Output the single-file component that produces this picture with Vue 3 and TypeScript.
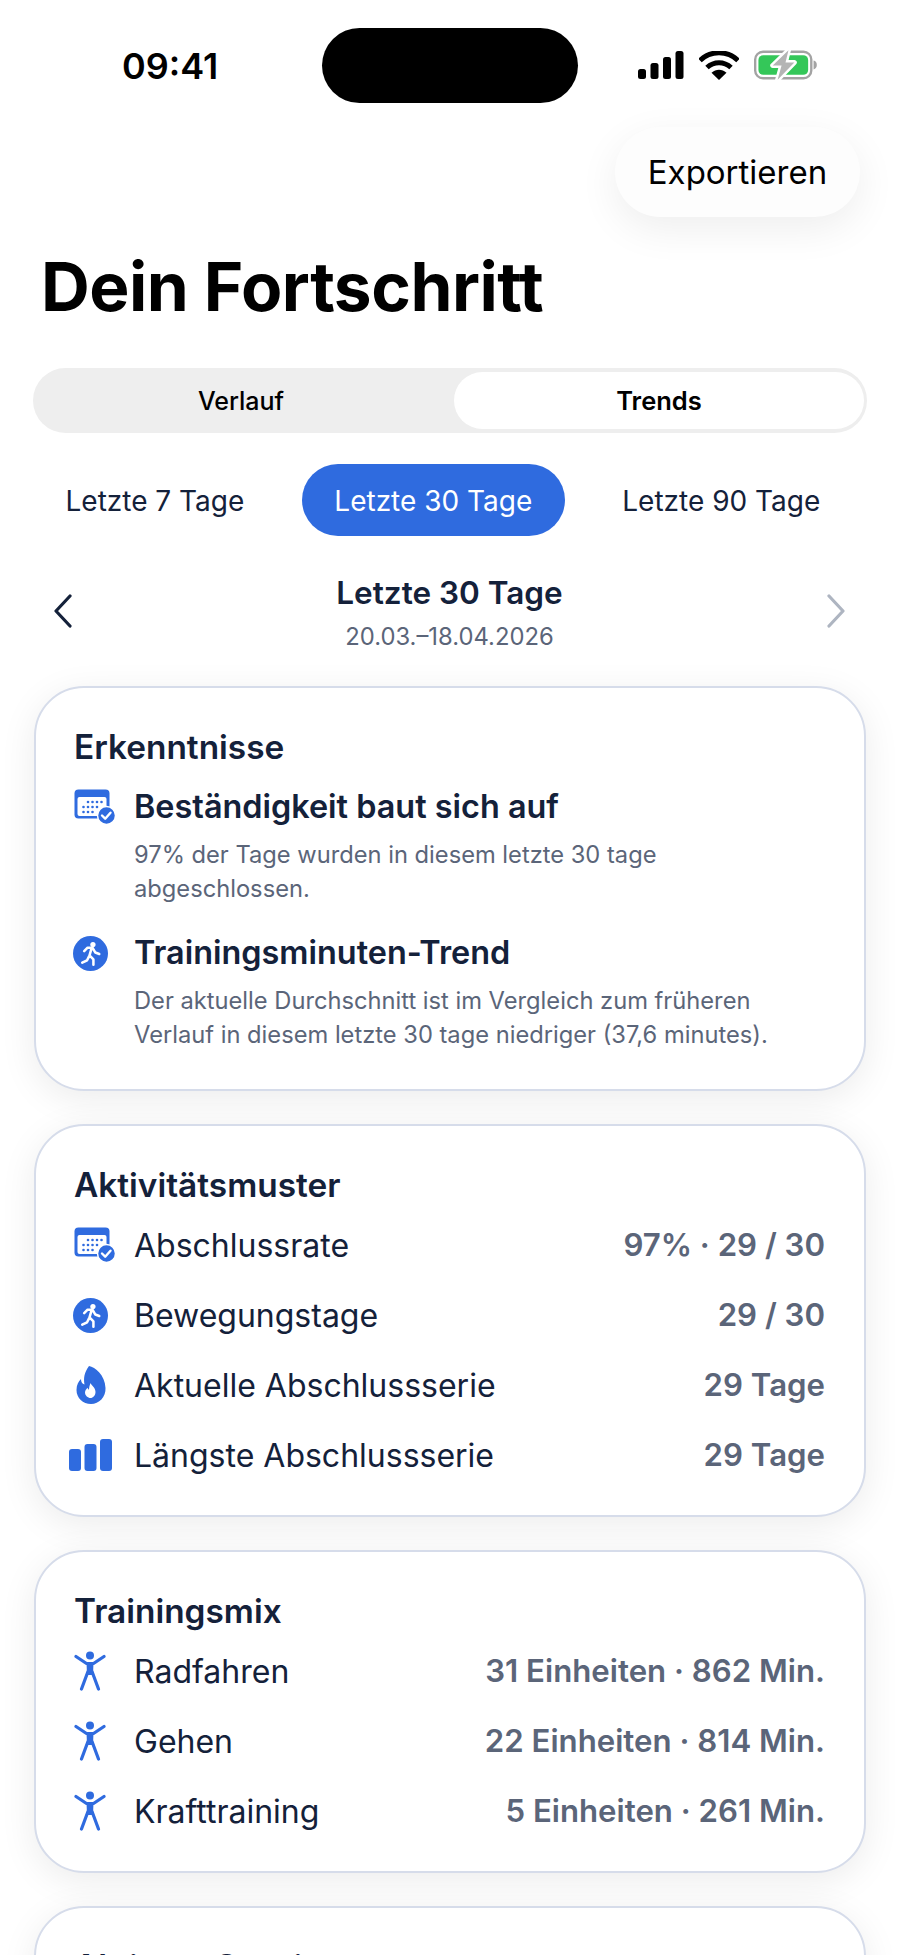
<script setup lang="ts">
interface Row { icon: string; label: string; value: string }
const ranges = ['Letzte 7 Tage', 'Letzte 30 Tage', 'Letzte 90 Tage']
const activity: Row[] = [
  { icon: 'cal', label: 'Abschlussrate', value: '97% · 29 / 30' },
  { icon: 'run', label: 'Bewegungstage', value: '29 / 30' },
  { icon: 'fire', label: 'Aktuelle Abschlussserie', value: '29 Tage' },
  { icon: 'bars', label: 'Längste Abschlussserie', value: '29 Tage' },
]
const mix: Row[] = [
  { icon: 'fig', label: 'Radfahren', value: '31 Einheiten · 862 Min.' },
  { icon: 'fig', label: 'Gehen', value: '22 Einheiten · 814 Min.' },
  { icon: 'fig', label: 'Krafttraining', value: '5 Einheiten · 261 Min.' },
]
const dots: [number, number][] = [
  [14, 13], [18.500, 13], [23, 13], [27.500, 13],
  [9.500, 18], [14, 18], [18.500, 18], [23, 18],
  [9.500, 23], [14, 23], [18.500, 23],
]
</script>

<template>
  <div class="page">
    <div class="status">
      <span class="time">09:41</span>
      <div class="island"></div>
      <div class="sys">
        <svg width="46" height="28" viewBox="0 0 46 28"><rect x="0" y="18" width="8" height="10" rx="2.5"/><rect x="12.5" y="12" width="8" height="16" rx="2.5"/><rect x="25" y="6" width="8" height="22" rx="2.5"/><rect x="37.5" y="0" width="8" height="28" rx="2.5"/></svg>
        <svg width="40" height="29" viewBox="0 0 40 29"><path d="M1 9.500C11.500-.8 28.500-.8 39 9.500" fill="none" stroke="#000" stroke-width="5" /><path d="M8 16.500c7-6.500 17-6.500 24 0" fill="none" stroke="#000" stroke-width="5"/><path d="M12.500 21.800c4.500-4 10.500-4 15 0L20 29z"/></svg>
        <svg width="63" height="32" viewBox="0 -1 64 32">
          <rect x="1.200" y="1.500" width="57" height="27" rx="8" fill="none" stroke="#a3a3a3" stroke-width="2.400"/>
          <rect x="4.500" y="5" width="50.500" height="20" rx="5" fill="#34c759"/>
          <path d="M60.500 10.500c2.300.6 3.300 2.200 3.300 4.500s-1 3.900-3.300 4.500z" fill="#a3a3a3"/>
          <path d="M35 0 19 15.500h9L24 30l17-17.500h-9z" fill="#b4b4b4" stroke="#fff" stroke-width="5" stroke-linejoin="round" paint-order="stroke"/>
        </svg>
      </div>
    </div>

    <div class="export-row"><button class="export">Exportieren</button></div>
    <h1 class="title">Dein Fortschritt</h1>

    <div class="segment">
      <div class="seg-item seg-off">Verlauf</div>
      <div class="seg-item seg-on">Trends</div>
    </div>

    <div class="ranges">
      <div v-for="(r, i) in ranges" :key="r" class="range" :class="{ 'range-on': i === 1 }">{{ r }}</div>
    </div>

    <div class="period">
      <svg class="chev" width="20" height="34" viewBox="0 0 20 34"><path d="M17 2 3 17l14 15" fill="none" stroke="#14213a" stroke-width="3.200" stroke-linecap="round" stroke-linejoin="round"/></svg>
      <div class="period-mid">
        <div class="period-title">Letzte 30 Tage</div>
        <div class="period-sub">20.03.–18.04.2026</div>
      </div>
      <svg class="chev" width="20" height="34" viewBox="0 0 20 34"><path d="m3 2 14 15L3 32" fill="none" stroke="#aeb5c1" stroke-width="3.200" stroke-linecap="round" stroke-linejoin="round"/></svg>
    </div>

    <section class="card card-insights">
      <h2 class="card-title">Erkenntnisse</h2>
      <div class="insight">
        <div class="ic">
          <svg width="42" height="36" viewBox="0 0 42 36"><rect x="0.500" y="0.500" width="35" height="29" rx="4" fill="#2f6bdf"/><rect x="3.500" y="8" width="29" height="19" rx="2" fill="#fff"/><circle v-for="d in dots" :key="d.join()" :cx="d[0]" :cy="d[1]" r="1.300" fill="#2f6bdf"/><circle cx="32.500" cy="26.500" r="9" fill="#2f6bdf" stroke="#fff" stroke-width="1.500"/><path d="m28 26.500 3.200 3.200 5.300-6" fill="none" stroke="#fff" stroke-width="2.400" stroke-linecap="round" stroke-linejoin="round"/></svg>
        </div>
        <div class="insight-body">
          <div class="insight-title">Beständigkeit baut sich auf</div>
          <p class="insight-text">97% der Tage wurden in diesem letzte 30 tage abgeschlossen.</p>
        </div>
      </div>
      <div class="insight">
        <div class="ic">
          <svg class="run" width="35" height="35" viewBox="0 0 36 36"><circle cx="18" cy="18" r="18" fill="#2f6bdf"/><circle cx="20.500" cy="8.800" r="2.700" fill="#fff"/><path d="M11.500 15.500 15 12h5l3 5 4 1.500M19 13l-2 7 4 4v5.500M16.500 21l-2 4-5 2.500" fill="none" stroke="#fff" stroke-width="2.600" stroke-linecap="round" stroke-linejoin="round"/></svg>
        </div>
        <div class="insight-body">
          <div class="insight-title">Trainingsminuten-Trend</div>
          <p class="insight-text">Der aktuelle Durchschnitt ist im Vergleich zum früheren Verlauf in diesem letzte 30 tage niedriger (37,6 minutes).</p>
        </div>
      </div>
    </section>

    <section v-for="(group, gi) in [activity, mix]" :key="gi" class="card">
      <h2 class="card-title card-title-rows">{{ gi === 0 ? 'Aktivitätsmuster' : 'Trainingsmix' }}</h2>
      <div v-for="row in group" :key="row.label" class="row">
        <div class="ic">
          <svg v-if="row.icon === 'cal'" width="42" height="36" viewBox="0 0 42 36"><rect x="0.500" y="0.500" width="35" height="29" rx="4" fill="#2f6bdf"/><rect x="3.500" y="8" width="29" height="19" rx="2" fill="#fff"/><circle v-for="d in dots" :key="d.join()" :cx="d[0]" :cy="d[1]" r="1.300" fill="#2f6bdf"/><circle cx="32.500" cy="26.500" r="9" fill="#2f6bdf" stroke="#fff" stroke-width="1.500"/><path d="m28 26.500 3.200 3.200 5.300-6" fill="none" stroke="#fff" stroke-width="2.400" stroke-linecap="round" stroke-linejoin="round"/></svg>
          <svg v-else-if="row.icon === 'run'" class="run" width="35" height="35" viewBox="0 0 36 36"><circle cx="18" cy="18" r="18" fill="#2f6bdf"/><circle cx="20.500" cy="8.800" r="2.700" fill="#fff"/><path d="M11.500 15.500 15 12h5l3 5 4 1.500M19 13l-2 7 4 4v5.500M16.500 21l-2 4-5 2.500" fill="none" stroke="#fff" stroke-width="2.600" stroke-linecap="round" stroke-linejoin="round"/></svg>
          <svg v-else-if="row.icon === 'fire'" class="fire" width="30" height="38" viewBox="0 0 30 38"><path d="M13 0c6 1 16 9 16.500 22C30 31 23 38 15 38S.500 32 .500 24c0-5 2-8.500 4.500-11 0 3 1 4.500 3.500 5.500C7.500 12 8 7 13 0z" fill="#2f6bdf"/><path d="M14.500 17c.8 2.500 5 4.500 5 9 0 3.500-2.500 6-5 6s-5.500-2.500-5.500-5.500c0-2.500 1.500-3.500 2.500-4.800.3 1 .8 1.700 1.500 2 0-2 .5-4 1.500-6.700z" fill="#fff"/></svg>
          <svg v-else-if="row.icon === 'bars'" class="bars" width="44" height="32" viewBox="0 0 44 32"><rect x="0" y="10" width="12" height="22" rx="3" fill="#2f6bdf"/><rect x="15.500" y="5" width="12" height="27" rx="3" fill="#2f6bdf"/><rect x="31" y="0" width="12" height="32" rx="3" fill="#2f6bdf"/></svg>
          <svg v-else width="32" height="40" viewBox="0 0 32 40"><circle cx="16" cy="4.500" r="4" fill="#2f6bdf"/><path d="M2 5.500 12.500 12.500h7L30 5.500M13.800 21 7.500 38M18.200 21 24.500 38" fill="none" stroke="#2f6bdf" stroke-width="3.200" stroke-linecap="round" stroke-linejoin="round"/><path d="M12.500 11.500h7L19 24h-6z" fill="#2f6bdf"/></svg>
        </div>
        <span class="row-label">{{ row.label }}</span>
        <span class="row-value">{{ row.value }}</span>
      </div>
    </section>

    <section class="card card-last">
      <h2 class="card-title">Aktivste Sessions</h2>
    </section>
  </div>
</template>

<style>
html, body { margin: 0; background: #fff; }
</style>

<style scoped>
.page {
  width: 900px;
  height: 1955px;
  overflow: hidden;
  position: relative;
  background: #fff;
  font-family: Inter, "Noto Sans", sans-serif;
  color: #14213a;
}
.status {
  height: 127px;
  display: flex;
  align-items: flex-start;
  box-sizing: border-box;
  padding: 28px 45px 0 122px;
}
.time {
  width: 200px;
  margin-top: 18px;
  font-size: 36px;
  line-height: 40px;
  font-weight: 600;
  color: #000;
}
.island {
  width: 256px;
  height: 75px;
  border-radius: 38px;
  background: #000;
}
.sys {
  margin-left: 60px;
  margin-top: 21px;
  display: flex;
  align-items: center;
  gap: 15px;
}
.export-row { display: flex; justify-content: flex-end; padding-right: 40px; }
.export {
  width: 245px;
  height: 90px;
  border: 0;
  border-radius: 45px;
  background: #fdfdfd;
  box-shadow: 0 12px 40px rgba(0, 0, 0, 0.07);
  font: 400 33px Inter, sans-serif;
  color: #000;
}
.title {
  margin: 30px 0 0 41px;
  font-size: 67.500px;
  line-height: 80px;
  font-weight: 700;
  color: #000;
  letter-spacing: -0.5px;
}
.segment {
  margin: 41px 33px 0 33px;
  height: 65px;
  box-sizing: border-box;
  padding: 4px 3px 4px 0;
  display: flex;
  border-radius: 33px;
  background: #eeeeee;
}
.seg-item {
  flex: 1;
  display: flex;
  align-items: center;
  justify-content: center;
  font-size: 25px;
  font-weight: 500;
  color: #000;
  border-radius: 29px;
}
.seg-off { padding-right: 5px; }
.seg-on { flex: none; width: 410px; background: #fff; font-weight: 600; font-size: 25.500px; }
.ranges {
  margin: 31px 40px 0 33px;
  display: flex;
  gap: 25px;
}
.range {
  height: 72px;
  box-sizing: border-box;
  padding: 1px 32.500px 0;
  display: flex;
  align-items: center;
  border-radius: 36px;
  font-size: 28px;
}
.range-on { background: #2f6bdf; color: #fff; }
.period {
  margin: 34px 54px 0 53px;
  display: flex;
  align-items: center;
  justify-content: space-between;
}
.chev { margin-bottom: 4px; }
.period-mid { text-align: center; }
.period-title { font-size: 31.500px; line-height: 46px; font-weight: 600; }
.period-sub { font-size: 23.800px; line-height: 36px; margin-top: 3px; color: #5b6579; }
.card {
  margin: 33px 34px 0;
  box-sizing: border-box;
  padding: 38px 39px 25px 38px;
  border: 2px solid #d6dcea;
  border-radius: 50px;
  background: #fff;
  box-shadow: 0 8px 36px rgba(0, 0, 0, 0.08);
}
.card-insights { margin-top: 31px; padding-bottom: 37px; }
.card-title {
  margin: 0;
  font-size: 33.400px;
  line-height: 42px;
  font-weight: 600;
}
.card-title-rows { margin-bottom: 4px; }
.ic {
  width: 60px;
  flex: none;
  display: flex;
  align-items: center;
}
.insight { display: flex; margin-top: 14px; }
.insight + .insight { margin-top: 22px; }
.insight .ic { height: 50px; }
.insight-title { font-size: 32.400px; line-height: 50px; font-weight: 600; }
.insight-text {
  margin: 6px 0 0;
  font-size: 23.700px;
  line-height: 34px;
  color: #5b6579;
}
.row {
  height: 70px;
  display: flex;
  align-items: center;
}
.row-label { font-size: 32px; flex: 1; }
.row-value { font-size: 31.200px; font-weight: 600; color: #5b6579; }
.bars { margin-left: -5px; }
.run { margin-left: -1px; }
.fire { margin-left: 2px; }
</style>
